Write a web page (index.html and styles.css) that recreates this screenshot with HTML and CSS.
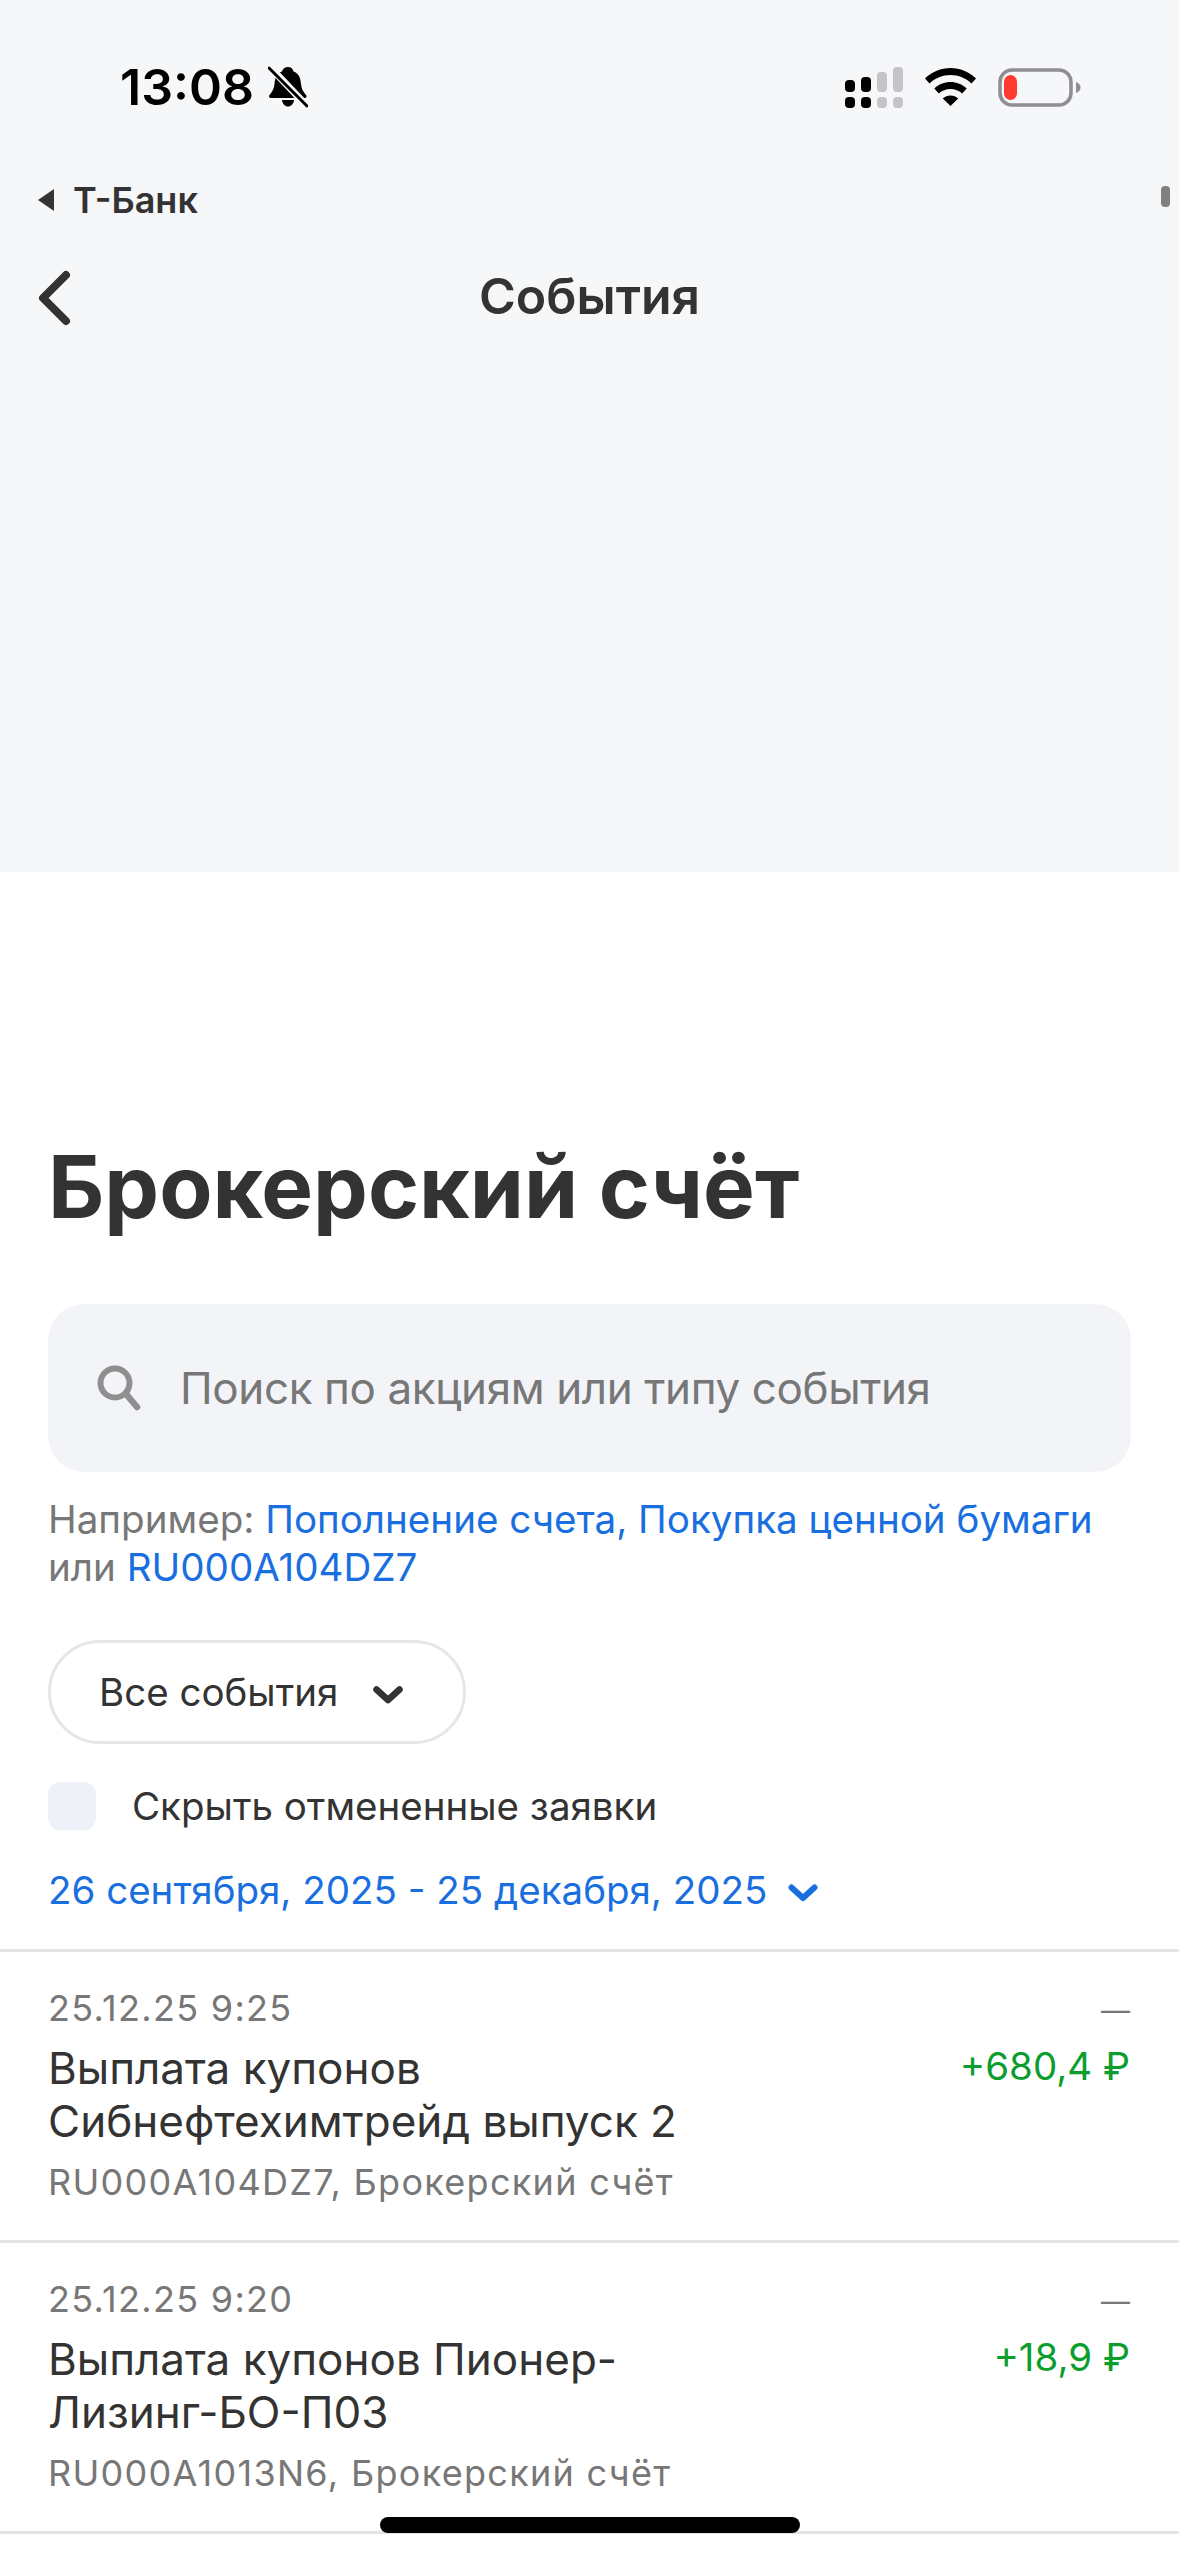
FILE: index.html
```html
<!DOCTYPE html>
<html lang="ru">
<head>
  <meta charset="UTF-8">
  <meta name="viewport" content="width=device-width, initial-scale=1.0">
  <title>События</title>
  <link rel="stylesheet" href="styles.css">
</head>
<body>
  <div class="page">
    <header class="top">
      <div class="status">
        <div class="status-left">
          <span class="time">13:08</span>
          <svg class="bell" width="40" height="42" viewBox="0 0 40 42">
            <path d="M20 1c3 0 5 2 5.500 4.500C31 7.500 32.500 12 33 18c.4 5 2.500 8 5 11 1 1.500.5 3-1.500 3H3c-2 0-2.500-1.500-1.500-3 2.500-3 4.600-6 5-11 .5-6 2-10.500 7.500-12.500C14.500 3 17 1 20 1z" fill="#000"/>
            <path d="M14 34h12c-.5 4-3 6.500-6 6.500s-5.500-2.500-6-6.500z" fill="#000"/>
            <path d="M2 1l36 38" stroke="#f6f7f9" stroke-width="7"/>
            <path d="M1 2l38 38" stroke="#000" stroke-width="3" stroke-linecap="round"/>
          </svg>
        </div>
        <div class="status-right">
          <svg class="signal" width="58" height="41" viewBox="0 0 58 41">
            <rect x="0" y="13" width="10" height="12" rx="4" fill="#000"/>
            <rect x="16" y="10" width="10" height="15" rx="4" fill="#000"/>
            <rect x="32" y="5" width="10" height="20" rx="4" fill="#c4c4c6"/>
            <rect x="48" y="0" width="10" height="25" rx="4" fill="#c4c4c6"/>
            <rect x="0" y="30" width="10" height="11" rx="4" fill="#000"/>
            <rect x="16" y="30" width="10" height="11" rx="4" fill="#000"/>
            <rect x="32" y="30" width="10" height="11" rx="4" fill="#c4c4c6"/>
            <rect x="48" y="30" width="10" height="11" rx="4" fill="#c4c4c6"/>
          </svg>
          <svg class="wifi" width="51" height="38" viewBox="0 0 51 38">
            <path d="M25.500 0C35 0 44 3.800 51 10.500l-4.500 5C40.800 10 33.500 7 25.500 7S10.200 10 4.500 15.500L0 10.500C7 3.800 16 0 25.500 0z" fill="#000"/>
            <path d="M25.500 14c6 0 11.800 2.300 16.200 6.500l-4.500 5c-3.200-3-7.300-4.600-11.700-4.600s-8.500 1.600-11.700 4.600l-4.500-5C13.700 16.300 19.500 14 25.500 14z" fill="#000"/>
            <path d="M25.500 27.500c2.900 0 5.600 1 7.700 3L25.500 38l-7.700-7.500c2.100-2 4.800-3 7.700-3z" fill="#000"/>
          </svg>
          <svg class="battery" width="83" height="39" viewBox="0 0 83 39">
            <rect x="2" y="2" width="71" height="35" rx="12" fill="none" stroke="#8e8e93" stroke-width="3.500"/>
            <rect x="6" y="7" width="13" height="25" rx="6.500" fill="#ff3b30"/>
            <path d="M78 14c3 1 4.500 3 4.500 5.500S81 24 78 25z" fill="#8e8e93"/>
          </svg>
        </div>
      </div>
      <div class="back-app">
        <span class="back-arrow"></span>
        <span>Т-Банк</span>
      </div>
      <nav class="nav">
        <svg class="nav-back" width="34" height="56" viewBox="0 0 34 56">
          <path d="M29 5L6 28l23 23" fill="none" stroke="#333" stroke-width="8" stroke-linecap="round" stroke-linejoin="round"/>
        </svg>
        <div class="nav-title">События</div>
      </nav>
      <div class="scroll-mark"></div>
    </header>

    <main class="content">
      <section class="filters">
        <h1>Брокерский счёт</h1>
        <div class="search">
          <svg width="44" height="46" viewBox="0 0 44 46">
            <circle cx="18" cy="18" r="14.500" fill="none" stroke="#8f8f8f" stroke-width="6"/>
            <path d="M29 29l11 13" stroke="#8f8f8f" stroke-width="6.500" stroke-linecap="round"/>
          </svg>
          <span>Поиск по акциям или типу события</span>
        </div>
        <p class="hint">Например: <a>Пополнение счета, Покупка ценной бумаги</a><br>или <a>RU000A104DZ7</a></p>
        <div class="pill">
          <span>Все события</span>
          <svg width="30" height="18" viewBox="0 0 30 18">
            <path d="M3.500 3.500L15 14 26.500 3.500" fill="none" stroke="#333" stroke-width="6.500" stroke-linecap="round" stroke-linejoin="round"/>
          </svg>
        </div>
        <label class="check">
          <span class="box"></span>
          <span>Скрыть отмененные заявки</span>
        </label>
        <div class="period">
          <span>26 сентября, 2025 - 25 декабря, 2025</span>
          <svg width="30" height="18" viewBox="0 0 30 18">
            <path d="M3.500 3.500L15 14 26.500 3.500" fill="none" stroke="#1a6fe0" stroke-width="6" stroke-linecap="round" stroke-linejoin="round"/>
          </svg>
        </div>
      </section>

      <article class="row">
        <div class="row-main">
          <div class="row-date">25.12.25 9:25</div>
          <div class="row-title">Выплата купонов<br>Сибнефтехимтрейд выпуск 2</div>
          <div class="row-sub">RU000A104DZ7, Брокерский счёт</div>
        </div>
        <div class="row-side">
          <div class="row-dash">—</div>
          <div class="row-sum">+680,4 ₽</div>
        </div>
      </article>
      <article class="row">
        <div class="row-main">
          <div class="row-date">25.12.25 9:20</div>
          <div class="row-title">Выплата купонов Пионер-<br>Лизинг-БО-П03</div>
          <div class="row-sub">RU000A1013N6, Брокерский счёт</div>
        </div>
        <div class="row-side">
          <div class="row-dash">—</div>
          <div class="row-sum">+18,9 ₽</div>
        </div>
      </article>
      <div class="row-end"></div>
    </main>

    <div class="home-bar"></div>
  </div>
</body>
</html>
```

FILE: styles.css
```css
* {
  box-sizing: border-box;
}
body {
  margin: 0;
  background: #fff;
  font-family: "Inter", "Noto Sans", sans-serif;
  color: #333;
}
.page {
  position: relative;
  width: 1179px;
  height: 2556px;
  overflow: hidden;
}

/* top grey part */
.top {
  position: relative;
  height: 872px;
  background: #f6f7f9;
  padding-top: 57px;
}
.status {
  display: flex;
  justify-content: space-between;
  align-items: center;
  height: 60px;
  padding: 0 98px 0 120px;
}
.status-left {
  display: flex;
  align-items: center;
  gap: 14px;
}
.time {
  font-size: 50px;
  line-height: 60px;
  font-weight: 600;
  color: #000;
}
.status-right {
  display: flex;
  align-items: center;
  gap: 22px;
}
.back-app {
  display: flex;
  align-items: center;
  gap: 19px;
  height: 40px;
  margin: 63px 0 0 38px;
  font-size: 36px;
  font-weight: 600;
}
.back-arrow {
  width: 0;
  height: 0;
  border-top: 11px solid transparent;
  border-bottom: 11px solid transparent;
  border-right: 16px solid #333;
}
.nav {
  position: relative;
  display: flex;
  justify-content: center;
  align-items: center;
  height: 60px;
  margin-top: 46px;
}
.nav-back {
  position: absolute;
  left: 37px;
  top: 4px;
}
.nav-title {
  font-size: 50px;
  font-weight: 600;
}
.scroll-mark {
  position: absolute;
  left: 1161px;
  top: 186px;
  width: 9px;
  height: 21px;
  border-radius: 4px;
  background: #808080;
}

/* filters */
.filters {
  padding: 265px 48px 0;
}
h1 {
  margin: 0;
  font-size: 87px;
  line-height: 100px;
  font-weight: 700;
}
.search {
  display: flex;
  align-items: center;
  gap: 39px;
  height: 168px;
  margin-top: 67px;
  padding-left: 49px;
  border-radius: 36px;
  background: #f2f4f8;
  font-size: 44px;
  letter-spacing: -0.4px;
  color: #777;
}
.hint {
  margin: 23px 0 0;
  font-size: 38.6px;
  line-height: 48px;
  white-space: nowrap;
  color: #777;
}
.hint a {
  color: #1a6fe0;
}
.pill {
  display: inline-flex;
  align-items: center;
  gap: 35px;
  width: 418px;
  height: 104px;
  margin-top: 49px;
  padding-left: 48px;
  border: 3px solid #e6e6e6;
  border-radius: 52px;
  font-size: 38.5px;
}
.pill svg {
  margin-top: 6px;
}
.check {
  display: flex;
  align-items: center;
  gap: 36px;
  height: 48px;
  margin-top: 38px;
  font-size: 38.5px;
}
.box {
  width: 48px;
  height: 48px;
  border-radius: 12px;
  background: #eef1f7;
}
.period {
  display: flex;
  align-items: center;
  gap: 21px;
  height: 48px;
  margin-top: 36px;
  font-size: 38.5px;
  color: #1a6fe0;
}
.period svg {
  margin-top: 6px;
}

/* events */
.row {
  display: flex;
  justify-content: space-between;
  height: 291px;
  margin-top: 0;
  padding: 34px 49px 0 48px;
  border-top: 3px solid #e4e4e4;
}
.filters + .row {
  margin-top: 35px;
}
.row-date,
.row-sub {
  font-size: 36px;
  line-height: 44px;
  letter-spacing: 1.3px;
  color: #777;
}
.row-title {
  margin: 12px 0 12px;
  font-size: 44px;
  line-height: 53px;
}
.row-side {
  text-align: right;
}
.row-dash {
  padding-top: 3px;
  font-size: 29px;
  line-height: 44px;
  color: #777;
}
.row-sum {
  margin-top: 7px;
  font-size: 38.5px;
  line-height: 53px;
  color: #0b9e2e;
}
.row-end {
  border-top: 3px solid #e4e4e4;
}
.home-bar {
  position: absolute;
  left: 380px;
  top: 2517px;
  width: 420px;
  height: 16px;
  border-radius: 8px;
  background: #000;
}
```
